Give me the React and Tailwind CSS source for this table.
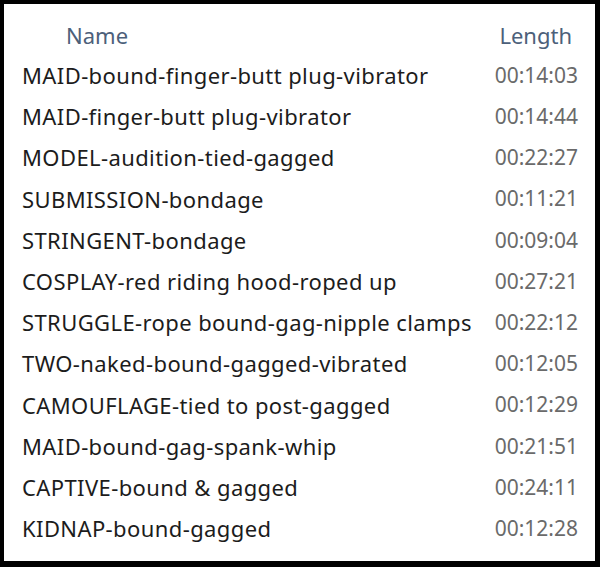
import React from 'react'

const FILES = [
  { name: 'MAID-bound-finger-butt plug-vibrator', len: '00:14:03' },
  { name: 'MAID-finger-butt plug-vibrator', len: '00:14:44' },
  { name: 'MODEL-audition-tied-gagged', len: '00:22:27' },
  { name: 'SUBMISSION-bondage', len: '00:11:21' },
  { name: 'STRINGENT-bondage', len: '00:09:04' },
  { name: 'COSPLAY-red riding hood-roped up', len: '00:27:21' },
  { name: 'STRUGGLE-rope bound-gag-nipple clamps', len: '00:22:12' },
  { name: 'TWO-naked-bound-gagged-vibrated', len: '00:12:05' },
  { name: 'CAMOUFLAGE-tied to post-gagged', len: '00:12:29' },
  { name: 'MAID-bound-gag-spank-whip', len: '00:21:51' },
  { name: 'CAPTIVE-bound & gagged', len: '00:24:11' },
  { name: 'KIDNAP-bound-gagged', len: '00:12:28' },
]

const App = () => {
  return (
    <div className="w-[600px] h-[567px] bg-black pt-[4px] pl-[4px] pr-[5px] pb-[6px] font-['Noto_Sans',sans-serif]">
      <div className="w-full h-full bg-white flex flex-col">
        <div className="h-[51px] pt-[11px] flex items-center text-[22px] text-[#4c607a]">
          <div className="flex-1 pl-[62px]">Name</div>
          <div className="pr-[23px]">Length</div>
        </div>
        {FILES.map((f, i) => (
          <div key={i} className="h-[41.2px] flex items-center">
            <div className="flex-1 pl-[18px] text-[22px] tracking-[0.4px] text-[#1c1c1c] whitespace-nowrap">{f.name}</div>
            <div className="pr-[17px] text-[21px] text-[#6a6a6a]">{f.len}</div>
          </div>
        ))}
      </div>
    </div>
  )
}

export default App
